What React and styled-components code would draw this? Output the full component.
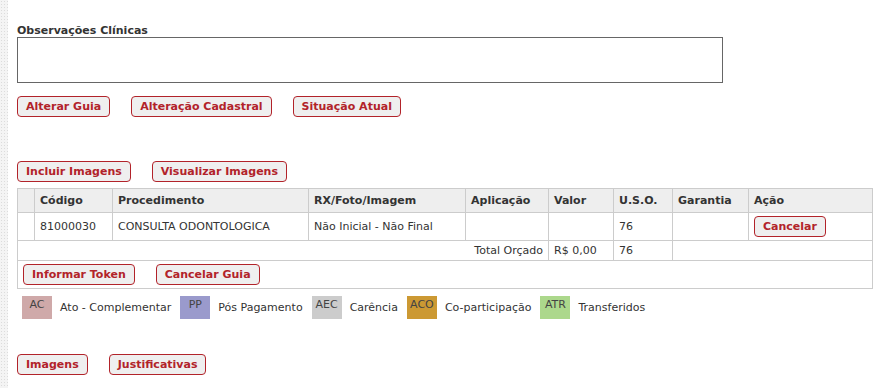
import React from "react";
import styled, { createGlobalStyle } from "styled-components";

const Global = createGlobalStyle`
  html, body { margin: 0; padding: 0; background: #fff; }
  body { font-family: "DejaVu Sans", Verdana, sans-serif; font-size: 11px; color: #333; }
`;

const Page = styled.div`
  display: flex;
  min-height: 388px;
`;

const Strip = styled.div`
  width: 8px;
  flex: none;
  background-color: #f4f4f4;
  background-image: radial-gradient(#dcdcdc 0.6px, transparent 0.8px);
  background-size: 3px 3px;
`;

const Content = styled.div`
  flex: 1;
  padding: 24px 1px 0 9px;
  display: flex;
  flex-direction: column;
`;

const Label = styled.div`
  font-weight: bold;
  line-height: 13px;
  color: #333;
`;

const TextArea = styled.textarea`
  display: block;
  box-sizing: border-box;
  width: 706px;
  height: 46px;
  margin: 0;
  border: 1px solid #666;
  resize: none;
  font-family: inherit;
`;

const ButtonRow = styled.div`
  display: flex;
  gap: ${(p) => p.$gap ?? 21}px;
  margin-top: ${(p) => p.$mt ?? 0}px;
`;

const Btn = styled.button`
  box-sizing: border-box;
  height: 21px;
  padding: 0 8px;
  background: #efefef;
  border: 1px solid #b2232a;
  border-radius: 4px;
  color: #b2232a;
  font-family: inherit;
  font-size: 11px;
  font-weight: bold;
  line-height: 19px;
  cursor: pointer;
`;

const Table = styled.table`
  margin-top: 6px;
  width: 855px;
  border-collapse: collapse;
  table-layout: fixed;
  font-size: 11px;
  color: #333;
`;

const Th = styled.th`
  height: 23px;
  padding: 0 5px;
  background: #eee;
  border: 1px solid #ccc;
  text-align: left;
  font-weight: bold;
`;

const Td = styled.td`
  height: ${(p) => p.$h ?? 27}px;
  padding: ${(p) => p.$pad ?? "0 5px"};
  border: 1px solid #ccc;
  text-align: ${(p) => p.$align ?? "left"};
  white-space: nowrap;
`;

const Legend = styled.div`
  display: flex;
  align-items: flex-start;
  margin: 7px 0 0 5px;
  height: 23px;
`;

const LegendBox = styled.span`
  box-sizing: border-box;
  width: 30px;
  height: 23px;
  background: ${(p) => p.$bg};
  color: #444;
  text-align: center;
  line-height: 18px;
  margin-right: 8px;
`;

const LegendText = styled.span`
  line-height: 23px;
  margin-right: 9px;
`;

const legend = [
  ["AC", "#cfa9a9", "Ato - Complementar"],
  ["PP", "#9a9acc", "Pós Pagamento"],
  ["AEC", "#cccccc", "Carência"],
  ["ACO", "#cc9933", "Co-participação"],
  ["ATR", "#acd88c", "Transferidos"],
];

export default function App() {
  return (
    <>
      <Global />
      <Page>
        <Strip />
        <Content>
          <Label>Observações Clínicas</Label>
          <TextArea />
          <ButtonRow $mt={13}>
            <Btn>Alterar Guia</Btn>
            <Btn>Alteração Cadastral</Btn>
            <Btn>Situação Atual</Btn>
          </ButtonRow>
          <ButtonRow $mt={44}>
            <Btn>Incluir Imagens</Btn>
            <Btn>Visualizar Imagens</Btn>
          </ButtonRow>
          <Table>
            <colgroup>
              <col style={{ width: 17 }} />
              <col style={{ width: 78 }} />
              <col style={{ width: 196 }} />
              <col style={{ width: 157 }} />
              <col style={{ width: 83 }} />
              <col style={{ width: 65 }} />
              <col style={{ width: 59 }} />
              <col style={{ width: 76 }} />
              <col style={{ width: 124 }} />
            </colgroup>
            <thead>
              <tr>
                <Th />
                <Th>Código</Th>
                <Th>Procedimento</Th>
                <Th>RX/Foto/Imagem</Th>
                <Th>Aplicação</Th>
                <Th>Valor</Th>
                <Th>U.S.O.</Th>
                <Th>Garantia</Th>
                <Th>Ação</Th>
              </tr>
            </thead>
            <tbody>
              <tr>
                <Td />
                <Td>81000030</Td>
                <Td>CONSULTA ODONTOLOGICA</Td>
                <Td>Não Inicial - Não Final</Td>
                <Td />
                <Td />
                <Td>76</Td>
                <Td />
                <Td>
                  <Btn>Cancelar</Btn>
                </Td>
              </tr>
              <tr>
                <Td colSpan={5} $h={19} $align="right">
                  Total Orçado
                </Td>
                <Td $h={19}>R$ 0,00</Td>
                <Td $h={19}>76</Td>
                <Td colSpan={2} $h={19} />
              </tr>
              <tr>
                <Td colSpan={9} $pad="0 5px">
                  <ButtonRow>
                    <Btn>Informar Token</Btn>
                    <Btn>Cancelar Guia</Btn>
                  </ButtonRow>
                </Td>
              </tr>
            </tbody>
          </Table>
          <Legend>
            {legend.map(([code, bg, text]) => (
              <React.Fragment key={code}>
                <LegendBox $bg={bg}>{code}</LegendBox>
                <LegendText>{text}</LegendText>
              </React.Fragment>
            ))}
          </Legend>
          <ButtonRow $mt={35}>
            <Btn>Imagens</Btn>
            <Btn>Justificativas</Btn>
          </ButtonRow>
        </Content>
      </Page>
    </>
  );
}
